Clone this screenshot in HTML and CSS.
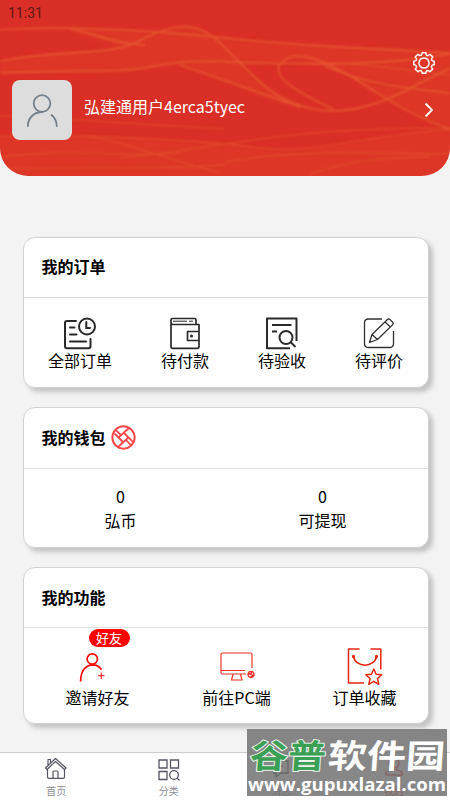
FILE: index.html
```html
<!DOCTYPE html>
<html lang="zh-CN">
<head>
<meta charset="utf-8">
<title>我的</title>
<link rel="stylesheet" href="styles.css">
</head>
<body>
<main class="screen">
  <header class="hero">
    <svg class="waves" viewBox="0 0 450 176" fill="none">
      <defs>
        <filter id="soft" x="-5%" y="-20%" width="110%" height="140%"><feGaussianBlur stdDeviation=".9"/></filter>
        <filter id="haze" x="-5%" y="-20%" width="110%" height="140%"><feGaussianBlur stdDeviation="2.5"/></filter>
      </defs>
      <g fill="#ee5b30" opacity=".17" filter="url(#haze)">
        <path d="M0 30C60 26 120 28 225 38C300 46 370 47 455 53V92C370 85 320 62 290 60C270 70 240 60 225 61C190 63 110 50 70 30Z"/>
        <path d="M0 61C70 48 100 57 135 43C165 27 195 16 225 48C260 80 275 99 320 109C260 105 220 75 180 65C110 77 60 70 0 73Z"/>
        <path d="M325 66C365 84 400 115 455 129V92C405 88 365 84 325 66Z"/>
        <path d="M-5 136C150 137 215 142 260 148C320 155 370 133 455 130V180H-5Z"/>
      </g>
      <g stroke="#f47a3a" stroke-width="1.6" opacity=".5" filter="url(#soft)">
        <path d="M0 30C40 26 130 28 225 38S350 47 450 53"/>
        <path d="M70 29C95 33 110 43 145 45"/>
        <path d="M0 61C70 48 100 57 135 43C165 27 195 14 225 48C255 78 270 94 291 102C340 124 390 100 420 83Q436 75 450 68"/>
        <path d="M0 73C75 69 115 74 155 66S210 63 225 61"/>
        <path d="M180 65C225 80 260 93 300 107"/>
        <path d="M333 109C295 91 272 77 280 64C296 45 330 64 352 77S405 114 450 129"/>
        <path d="M325 66C365 84 405 88 450 93"/>
        <path d="M225 62C330 65 390 65 450 54"/>
      </g>
      <g stroke="#f47a3a" stroke-width="1.4" opacity=".3" filter="url(#soft)">
        <path d="M352 64C390 67 420 72 450 75"/>
        <path d="M75 136C125 139 140 152 220 173"/>
        <path d="M0 136H75C150 138 215 142 260 148C320 155 370 133 450 130"/>
        <path d="M0 116C60 118 100 122 225 129"/>
        <path d="M120 158C240 145 280 128 450 128"/>
        <path d="M225 162C290 150 350 153 450 154"/>
        <path d="M0 157C70 148 100 157 180 153"/>
        <path d="M0 170C80 165 130 171 225 165"/>
        <path d="M310 174C350 160 380 158 430 157"/>
      </g>
    </svg>
    <div class="clock">11:31</div>
    <svg class="gear" viewBox="0 0 24 24" fill="none" stroke="#fff" stroke-width="1.5" stroke-linejoin="round">
      <path d="M10.2 1.8H13.8Q14 4.5 15.4 4.7Q16.8 4.3 18 3.2L20.8 6Q19.3 7.6 19.5 8.8Q20.2 10 22.2 10.2V13.8Q20 14 19.4 15.3Q19.2 16.7 20.8 18L18 20.8Q16.4 19.2 15.2 19.5Q14 20.2 13.8 22.2H10.2Q10 20 8.7 19.4Q7.3 19.2 6 20.8L3.2 18Q4.8 16.4 4.5 15.2Q3.8 14 1.8 13.8V10.2Q4 10 4.6 8.7Q4.8 7.3 3.2 6L6 3.2Q7.6 4.8 8.8 4.5Q10 3.8 10.2 1.8Z"/>
      <circle cx="12" cy="12" r="5.1"/>
    </svg>
    <div class="profile">
      <div class="avatar">
        <svg viewBox="0 0 60 60" fill="none" stroke="#74808c" stroke-width="1.8" stroke-linecap="round"><circle cx="30" cy="23.5" r="8.3"/><path d="M15.8 46C16 38 22 32 30 32M39.5 35C42.8 37.5 44.6 41.5 44.8 46"/></svg>
      </div>
      <span class="username">弘建通用户4erca5tyec</span>
      <svg class="arrow" viewBox="0 0 10 16" fill="none" stroke="#fff" stroke-width="1.8"><path d="M1.5 1.5L8 8L1.5 14.5"/></svg>
    </div>
  </header>

  <section class="card orders">
    <h2>我的订单</h2>
    <div class="items">
      <div class="item">
        <svg viewBox="62 316 36 34" fill="none" stroke="#292929" stroke-width="2" stroke-linecap="round">
          <path d="M76 321H67Q65 321 65 323V346Q65 348.300 67 348.300H88.500Q90.500 348.300 90.500 346V339M70 327.500H74.500M70 334.500H76.500M70 341.500H86"/><circle cx="87" cy="326.500" r="8"/><path d="M86.300 322V328H90"/>
        </svg><span>全部订单</span>
      </div>
      <div class="item">
        <svg viewBox="167 316 36 34" fill="none" stroke="#292929" stroke-width="1.7" stroke-linejoin="round">
          <path d="M171 323.500V347Q171 348.300 172.500 348.300H197.500Q199 348.300 199 347V324.500H172.500Q171 324.500 171 322V320Q171 318.500 172.500 318.500H194.500Q196 318.500 196 320V324"/><path d="M173 321.200H187M189 321.200H193" stroke-width="1"/><path d="M199 331.500H187.500V340.500H199"/><circle cx="191.500" cy="336" r=".7"/>
        </svg><span>待付款</span>
      </div>
      <div class="item">
        <svg viewBox="264 316 36 34" fill="none" stroke="#292929" stroke-width="2" stroke-linejoin="round">
          <path d="M290 348.300H267V318.500H296.500V341M272 325H291.500M272 331.500H277"/><circle cx="286" cy="337.500" r="6.500"/><path d="M290.500 342L295.500 347"/>
        </svg><span>待验收</span>
      </div>
      <div class="item">
        <svg viewBox="361 316 36 34" fill="none" stroke="#303030" stroke-width="1.300" stroke-linejoin="round">
          <path d="M382 319H368.500Q364.500 319 364.500 323V343.500Q364.500 347.500 368.500 347.500H389.500Q393.500 347.500 393.500 343.500V331M369.500 342.500L372 334.500L387.500 319.500Q388.700 318.500 390 319.600L392.700 322.300Q393.800 323.500 392.700 324.600L377.500 339.500ZM372 334.500L377.500 339.500M385 322L390.500 327"/>
        </svg><span>待评价</span>
      </div>
    </div>
  </section>

  <section class="card wallet">
    <h2>我的钱包
      <svg class="coin" viewBox="0 0 24 24" fill="none" stroke="#fb4549" stroke-width="1.7"><circle cx="12" cy="12" r="10.700" stroke-width="1.9"/><path d="M17.200 2.900L7.200 12L12 16.800M6.800 21.100L16.800 12L12 7.200M4.600 5L9.500 9.800M12 7.200L20.800 16M3.200 8L7.200 12M14.500 14.400L18.800 19"/></svg>
    </h2>
    <div class="items"><div class="item"><span>0</span><span>弘币</span></div><div class="item"><span>0</span><span>可提现</span></div></div>
  </section>

  <section class="card features">
    <h2>我的功能</h2>
    <div class="items">
      <div class="item invite">
        <b class="badge">好友</b>
        <svg viewBox="77 646 40 40" fill="none" stroke="#ff0a0a" stroke-width="1.700"><circle cx="92.300" cy="659" r="5.200"/><path d="M80.700 681.500C80.500 671 85.500 665 93 664.800C96.500 664.800 99.500 666.600 101.500 669.800"/><path d="M98 675.700H104.500M101.200 672.500V679" stroke-width="1"/></svg>
        <span>邀请好友</span>
      </div>
      <div class="item">
        <svg viewBox="216 646 40 40" fill="none" stroke="#e93427" stroke-width="1.200"><path d="M245 674H221.500Q220 674 220 672.500V654.500Q220 653 221.500 653H249.500Q251 653 251 654.500V668M220 670.500H244M232 674.500L230.500 680H241L239.500 674.500"/><circle cx="250" cy="674.300" r="3"/><path d="M247 673.500L250 674L251 671.500M250 677L253 674.500" stroke-width="1.800"/></svg>
        <span>前往PC端</span>
      </div>
      <div class="item">
        <svg viewBox="344.500 646 40 40" fill="none" stroke="#e72614" stroke-width="1.500" stroke-linejoin="round"><path d="M359 649H348V683H363.500M370 649H380.300V669.500M353 656.500C355 668 374 668 376 656.500"/><circle cx="353" cy="656.500" r=".9"/><circle cx="376" cy="656.500" r=".9"/><path d="M373.300 669L375.600 674.200L381.300 674.700L377 678.500L378.300 684.300L373.300 681.300L368.300 684.300L369.600 678.500L365.300 674.700L371 674.200Z"/></svg>
        <span>订单收藏</span>
      </div>
    </div>
  </section>

  <nav class="tabs">
    <div class="tab">
      <svg viewBox="45 757 24 24" fill="none" stroke="#555563" stroke-width="1.200" stroke-linejoin="round"><path d="M46.500 768L56.500 758.500L67 768L65.500 769.500L56.500 761.500L48 769.500ZM48.500 769V777Q48.500 778.300 50 778.300H64Q65.500 778.300 65.500 777V769M54 778V772Q54 771 55 771H58Q59 771 59 772V778M49 765V759.500H51.500V763"/></svg>首页
    </div>
    <div class="tab">
      <svg viewBox="157 757 24 24" fill="none" stroke="#555563" stroke-width="1.300"><path d="M159 760H167V768H159ZM170.500 760H178.500V768H170.500ZM159 771.500H167V779.500H159Z"/><circle cx="174" cy="775" r="4.300"/><path d="M177 778L179.500 780.500"/></svg>分类
    </div>
    <div class="tab">
      <svg viewBox="0 0 24 24" fill="none" stroke="#333340" stroke-width="1.300"><path d="M5 4H19V16H12L7 20V16H5ZM8 9H14"/></svg>消息
    </div>
    <div class="tab active">
      <svg viewBox="0 0 24 24" fill="none" stroke="#e5352c" stroke-width="1.500"><circle cx="12" cy="6" r="5"/><path d="M9.500 10.500V13Q4 14 3.500 16.500Q3.500 18 6 18H19Q21 18 20.500 16.500Q20 14 14.500 13V10.500"/></svg>我的
    </div>
  </nav>

  <aside class="watermark">
    <svg viewBox="0 0 200 67">
      <g class="brand" stroke-linejoin="round" paint-order="stroke" transform="translate(4 0) skewX(-4)">
        <text x="1" y="39" textLength="76" lengthAdjust="spacingAndGlyphs" fill="#3ba056" stroke="#e8f3e9" stroke-width="2">谷普</text>
        <text x="79" y="39" textLength="117" lengthAdjust="spacingAndGlyphs" fill="#fff">软件园</text>
      </g>
      <text class="url" x="1" y="62" textLength="198" lengthAdjust="spacingAndGlyphs" fill="#fff">www.gupuxlazal.com</text>
    </svg>
  </aside>
</main>
</body>
</html>
```
FILE: styles.css
```css
* { box-sizing: border-box; }
body { margin: 0; font-family: "Noto Sans CJK SC", sans-serif; color: #000; }
svg { display: block; }
.screen { position: relative; width: 450px; height: 800px; overflow: hidden; background: #f3f3f3; display: flex; flex-direction: column; }
.hero { position: relative; height: 176px; flex: none; margin-bottom: 61px; background: #da2f26; border-radius: 0 0 28px 28px; overflow: hidden; }
.waves { position: absolute; inset: 0; width: 450px; height: 176px; }
.clock { position: absolute; left: 8px; top: 5px; font: 400 14px/16px Roboto, sans-serif; color: #5d1715; }
.gear { position: absolute; left: 412px; top: 51px; width: 24px; height: 24px; }
.profile { position: relative; display: flex; align-items: center; padding: 80px 16px 0 12px; }
.avatar { width: 60px; height: 60px; border-radius: 8px; background: #ddd; }
.username { flex: 1; margin: -8px 0 0 12px; font-size: 16px; line-height: 24px; color: #fff; }
.arrow { width: 10px; height: 16px; }
.card { position: relative; flex: none; width: 406px; margin: 0 0 19px 22.5px; background: #fff; border: 1px solid #d2d2d2; border-radius: 12px; box-shadow: 4px 4px 5px rgba(0,0,0,.2); }
.orders { height: 151px; }
.wallet { height: 141px; }
.features { height: 157px; }
.card h2 { display: flex; align-items: center; gap: 5px; height: 60px; margin: 0; padding: 0 0 3px 18px; border-bottom: 1px solid #dedede; font-size: 16px; line-height: 24px; font-weight: 700; }
.wallet h2 { height: 61px; padding-bottom: 2px; }
.features h2 { padding-bottom: 1px; }
.coin { width: 25px; height: 25px; }
.items { display: flex; justify-content: space-around; font-size: 16px; line-height: 24px; }
.item { display: flex; flex-direction: column; align-items: center; white-space: nowrap; }
.orders .items { padding-top: 18px; }
.orders svg { width: 36px; height: 34px; margin-bottom: -2px; }
.wallet .items { padding-top: 15px; }
.features .items { display: grid; grid-template-columns: 148px 130px 126px; padding-top: 18px; }
.features .item svg { width: 40px; height: 40px; margin-bottom: -1px; }
.invite { position: relative; }
.invite svg { transform: translateX(-1px); }
.badge { position: absolute; left: 65px; top: -17px; width: 41px; height: 18px; border-radius: 9px; background: #fe0000; color: #fff; font-size: 13px; line-height: 17px; font-weight: 400; text-align: center; }
.tabs { position: absolute; left: 0; right: 0; bottom: 0; height: 48px; display: grid; grid-template-columns: repeat(4, 1fr); background: #fff; border-top: 1px solid #ccc; }
.tab { display: flex; flex-direction: column; align-items: center; padding-top: 4px; font-size: 10px; line-height: 19px; color: #8d8d96; }
.tab svg { width: 24px; height: 24px; }
.active { color: #e5352c; }
.watermark { position: absolute; left: 247px; top: 729px; width: 200px; height: 67px; background: rgba(112,112,112,.84); }
.watermark svg { width: 200px; height: 67px; }
.brand { font: 700 33px "Noto Sans CJK SC", sans-serif; }
.url { font: 700 18px "Open Sans", sans-serif; }
```
